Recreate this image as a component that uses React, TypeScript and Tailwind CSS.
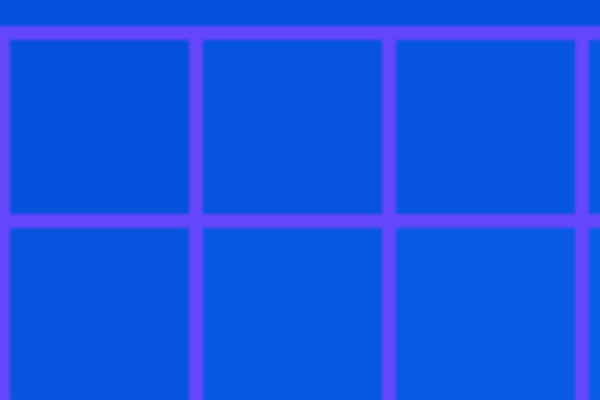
// cells get a touch lighter towards the bottom right
const cellColors = [
    'bg-[#0551dc]',
    'bg-[#0653de]',
    'bg-[#0755e0]',
    'bg-[#0857e2]',
    'bg-[#0654de]',
    'bg-[#0757e1]',
    'bg-[#085ae4]',
    'bg-[#0a5de7]',
];

export default function App() {
    return (
        <div className="w-[600px] h-[400px] overflow-hidden bg-gradient-to-b from-[#0551dc] to-[#0858e2] pt-[26px]">
            <div className="-ml-[4px] w-[800px] p-[14px] pr-0 bg-[#6446fb] blur-[1.8px] grid grid-cols-[179px_179px_179px_179px] gap-[14px]">
                {cellColors.map((c, i) => (
                    <div key={i} className={`h-[174px] ${c}`} />
                ))}
            </div>
        </div>
    );
}
